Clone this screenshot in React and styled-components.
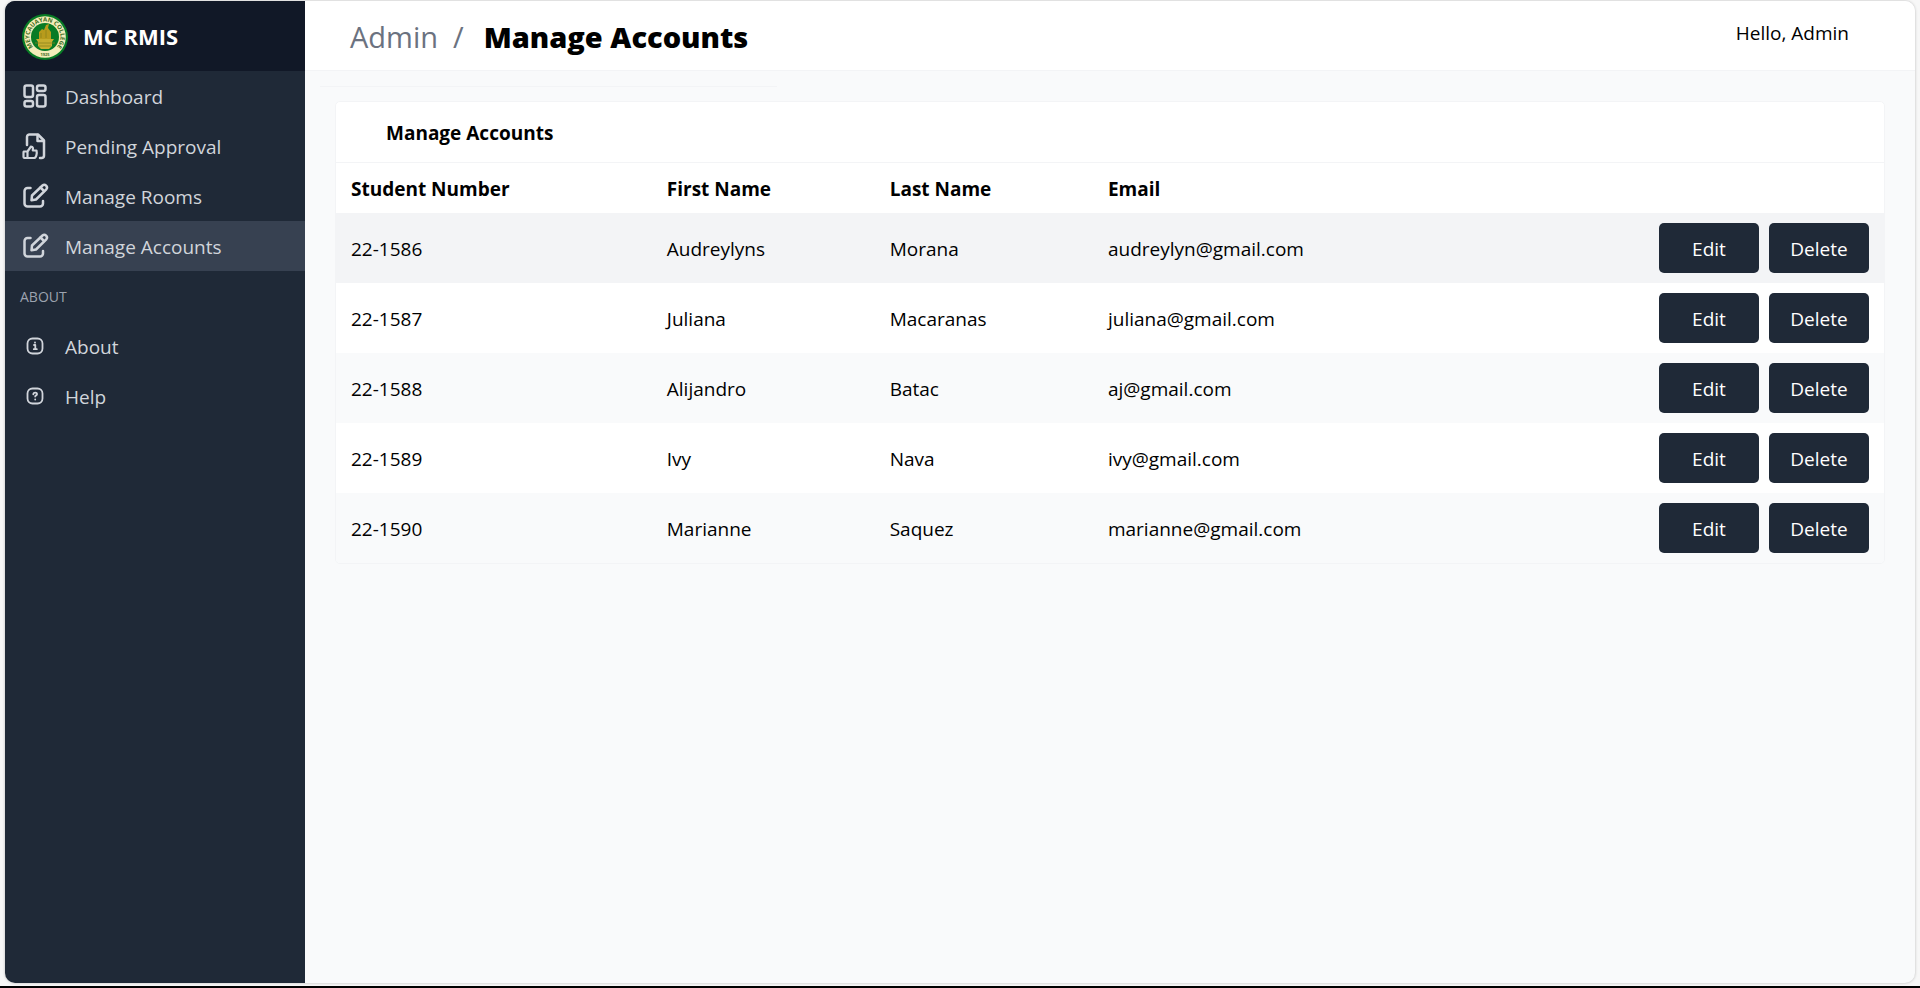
import React from 'react';
import styled, { createGlobalStyle, css } from 'styled-components';

const Global = createGlobalStyle`
  *, *::before, *::after { box-sizing: border-box; }
  html { height: 100%; }
  body {
    margin: 0;
    min-height: 100vh;
    background: #f7f7f7;
    color: #000;
    font-family: "Open Sans", "Noto Sans", sans-serif;
    font-size: 19px;
    line-height: 30px;
  }
  h1, h2, p, ul { margin: 0; padding: 0; }
  ul { list-style: none; }
`;

const Page = styled.div`
  display: flex;
  min-height: 100vh;
  padding: 1px 5px 3px;
  border-bottom: 2px solid #000;
`;

const Frame = styled.div`
  display: flex;
  flex: 1;
  border-radius: 10px;
  overflow: hidden;
  background: #f9fafb;
  box-shadow: 0 0 3px rgba(0, 0, 0, 0.25);
`;

const Sidebar = styled.aside`
  flex: 0 0 300px;
  background: #1f2937;
  color: #d1d5db;
`;

const Brand = styled.div`
  display: flex;
  align-items: center;
  gap: 14px;
  height: 70px;
  padding: 0 16px;
  background: #111827;
  color: #fff;
  font-size: 22px;
  font-weight: 700;
`;

const Seal = styled.svg`
  width: 48px;
  height: 48px;
`;

const SealLettering = styled.text`
  fill: #3d6b1d;
  font-size: ${(p) => p.$size}px;
  font-weight: 700;
  text-anchor: middle;
`;

const NavLink = styled.a`
  display: flex;
  align-items: center;
  gap: 15px;
  height: 50px;
  padding: 0 15px;
  color: inherit;
  text-decoration: none;
  ${(p) => p.$active && css`background: #374151;`}
`;

const NavLabel = styled.span`
  padding-top: 2px;
`;

const NavIcon = styled.svg`
  flex: none;
  width: 30px;
  height: 30px;
  fill: none;
  stroke: currentColor;
  stroke-width: ${(p) => (p.$fine ? 1.8 : 2.5)};
  stroke-linecap: round;
  stroke-linejoin: round;
`;

const NavHeading = styled.h2`
  padding: 11px 15px 9px;
  color: #9ca3af;
  font-size: 14px;
  font-weight: 400;
  text-transform: uppercase;
`;

const Content = styled.div`
  flex: 1;
  min-width: 0;
`;

const TopBar = styled.header`
  display: flex;
  justify-content: space-between;
  height: 70px;
  padding: 0 66px 0 45px;
  border-bottom: 1px solid #f3f4f6;
  background: #fff;
`;

const Crumbs = styled.nav`
  display: flex;
  align-items: center;
  gap: 15px;
  padding-top: 2px;
  font-size: 29px;
`;

const CrumbLink = styled.a`
  color: #6b7280;
  text-decoration: none;
`;

const Slash = styled.span`
  padding-right: 5px;
  color: #6b7280;
`;

const Title = styled.h1`
  font-size: 29px;
  font-weight: 800;
`;

const Greeting = styled.p`
  padding-top: 17px;
`;

const Main = styled.main`
  padding: 15px 30px 30px;
`;

const Rule = styled.hr`
  width: 457px;
  max-width: 100%;
  height: 1px;
  margin: 0 0 14px -15px;
  border: 0;
  background: #f3f4f6;
`;

const Card = styled.section`
  border: 1px solid #f3f4f6;
  border-radius: 5px;
  overflow: hidden;
  background: #fff;
`;

const CardTitle = styled.h2`
  padding: 16px 50px 14px;
  border-bottom: 1px solid #f3f4f6;
  font-size: 19px;
  font-weight: 700;
`;

const Table = styled.table`
  width: 100%;
  border-collapse: collapse;
  table-layout: fixed;
`;

const HeadCell = styled.th`
  width: ${(p) => p.$width};
  padding: 11px 15px 9px;
  font-weight: 700;
  text-align: left;
`;

const Row = styled.tr`
  background: #fff;
  &:nth-child(odd) {
    background: ${(p) => (p.$highlighted ? '#f3f4f6' : '#f9fafb')};
  }
`;

const Cell = styled.td`
  padding: 12px 15px 10px;
`;

const ActionCell = styled.td`
  padding: 10px 15px;
`;

const Actions = styled.div`
  display: flex;
  justify-content: flex-end;
  gap: 10px;
`;

const ActionButton = styled.button`
  width: 100px;
  height: 50px;
  padding: 2px 0 0;
  border: 0;
  border-radius: 5px;
  background: #1f2937;
  color: #fff;
  font: inherit;
`;

const icons = {
  dashboard: (
    <>
      <rect x="4.5" y="4.5" width="8.5" height="11.5" rx="2" />
      <rect x="17" y="4.5" width="8.5" height="5.5" rx="2" />
      <rect x="4.5" y="20" width="8.5" height="5.5" rx="2" />
      <rect x="17" y="14" width="8.5" height="11.5" rx="2" />
    </>
  ),
  approval: (
    <>
      <path d="M7 14V6a2.5 2.5 0 0 1 2.5-2.5H18l6 6v15a2.5 2.5 0 0 1-2.5 2.5H20" />
      <path d="M17.5 4v6h6" />
      <path
        strokeWidth="2.2"
        d="M4 20.5h3.5V27h-3a1 1 0 0 1-1-1v-4.500a1 1 0 0 1 .5-1zM7.5 20.5l3.5-5c2 0 2.200 1.500 1.800 4h3.700c.8 3-.3 7.500-2.500 7.500H7.500"
      />
    </>
  ),
  edit: (
    <>
      <path d="M10.5 7h-3a3 3 0 0 0-3 3v12.5a3 3 0 0 0 3 3H20a3 3 0 0 0 3-3V20" />
      <path d="M12 14.5l10.500-10a2.700 2.700 0 0 1 3.800 3.800L16 18.500l-4.500.8z" />
      <path d="M20.5 6.500l3.500 3.500" />
    </>
  ),
  info: (
    <>
      <rect x="7.5" y="7.5" width="15" height="15" rx="5" />
      <path d="M14 14h1.300v4M13.800 18.200h3M15 11.500v.2" />
    </>
  ),
  help: (
    <>
      <rect x="7.5" y="7.5" width="15" height="15" rx="5" />
      <path d="M13.300 13.300c0-2.400 4-2.200 3.700 0c-.2 1.200-1.700 1-1.800 2.200M15.200 18.300v.2" />
    </>
  ),
};

const mainLinks = [
  { label: 'Dashboard', icon: 'dashboard' },
  { label: 'Pending Approval', icon: 'approval' },
  { label: 'Manage Rooms', icon: 'edit' },
  { label: 'Manage Accounts', icon: 'edit', active: true },
];

const aboutLinks = [
  { label: 'About', icon: 'info', fine: true },
  { label: 'Help', icon: 'help', fine: true },
];

const accounts = [
  ['22-1586', 'Audreylyns', 'Morana', 'audreylyn@gmail.com'],
  ['22-1587', 'Juliana', 'Macaranas', 'juliana@gmail.com'],
  ['22-1588', 'Alijandro', 'Batac', 'aj@gmail.com'],
  ['22-1589', 'Ivy', 'Nava', 'ivy@gmail.com'],
  ['22-1590', 'Marianne', 'Saquez', 'marianne@gmail.com'],
];

function NavList({ links }) {
  return (
    <ul>
      {links.map((link) => (
        <li key={link.label}>
          <NavLink href="#" $active={link.active} aria-current={link.active ? 'page' : undefined}>
            <NavIcon viewBox="0 0 30 30" aria-hidden="true" $fine={link.fine}>
              {icons[link.icon]}
            </NavIcon>
            <NavLabel>{link.label}</NavLabel>
          </NavLink>
        </li>
      ))}
    </ul>
  );
}

function CollegeSeal() {
  return (
    <Seal viewBox="0 0 48 48" aria-hidden="true">
      <circle cx="24" cy="25" r="23" fill="#087b25" />
      <circle cx="24" cy="25" r="20.8" fill="#f3edb8" />
      <circle cx="24" cy="25" r="14" fill="#087b25" />
      <path id="seal-ring" d="M24 40.5a15.5 15.5 0 0 1 0-31a15.5 15.5 0 0 1 0 31" fill="none" />
      <SealLettering $size={6}>
        <textPath href="#seal-ring" startOffset="50%">MEYCAUAYAN COLLEGE</textPath>
      </SealLettering>
      <SealLettering $size={4} x="24" y="44">1925</SealLettering>
      <path d="M18 27v-7l3-3 2 1 2-5 3-1-1 4 3 4v7z" fill="#b89b1c" />
      <path d="M15 27h18l-2 3v4l-3 3h-8l-3-3v-4z" fill="#c6ae30" />
      <path d="M20 21v5M25 18v8M14 31h20M18 34h12" stroke="#8c831c" strokeWidth="0.8" fill="none" />
    </Seal>
  );
}

export default function App() {
  return (
    <>
      <Global />
      <Page>
        <Frame>
          <Sidebar>
            <Brand>
              <CollegeSeal />
              MC RMIS
            </Brand>
            <nav>
              <NavList links={mainLinks} />
              <NavHeading>About</NavHeading>
              <NavList links={aboutLinks} />
            </nav>
          </Sidebar>
          <Content>
            <TopBar>
              <Crumbs aria-label="Breadcrumb">
                <CrumbLink href="#">Admin</CrumbLink>
                <Slash>/</Slash>
                <Title>Manage Accounts</Title>
              </Crumbs>
              <Greeting>Hello, Admin</Greeting>
            </TopBar>
            <Main>
              <Rule />
              <Card>
                <CardTitle>Manage Accounts</CardTitle>
                <Table>
                  <thead>
                    <tr>
                      <HeadCell $width="20.4%">Student Number</HeadCell>
                      <HeadCell $width="14.4%">First Name</HeadCell>
                      <HeadCell $width="14.1%">Last Name</HeadCell>
                      <HeadCell>Email</HeadCell>
                      <HeadCell $width="240px" aria-label="Actions" />
                    </tr>
                  </thead>
                  <tbody>
                    {accounts.map((account, index) => (
                      <Row key={account[0]} $highlighted={index === 0}>
                        {account.map((value) => (
                          <Cell key={value}>{value}</Cell>
                        ))}
                        <ActionCell>
                          <Actions>
                            <ActionButton type="button">Edit</ActionButton>
                            <ActionButton type="button">Delete</ActionButton>
                          </Actions>
                        </ActionCell>
                      </Row>
                    ))}
                  </tbody>
                </Table>
              </Card>
            </Main>
          </Content>
        </Frame>
      </Page>
    </>
  );
}
